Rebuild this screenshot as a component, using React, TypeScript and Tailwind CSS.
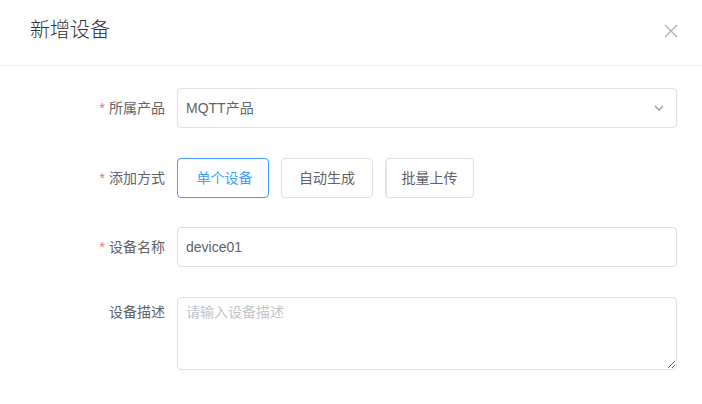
import React from "react";

const font = { fontFamily: '"Liberation Sans", "Noto Sans CJK SC", sans-serif' };

function Label({ text, required }: { text: string; required?: boolean }) {
  return (
    <div className="w-[177px] shrink-0 pr-3 text-right text-[14px] leading-[40px] text-[#606266]">
      {required && <span className="mr-1 text-[#f56c6c]">*</span>}
      {text}
    </div>
  );
}

export default function App() {
  return (
    <div className="h-[404px] w-[702px] overflow-hidden bg-white" style={font}>
      <div className="flex h-[66px] items-center justify-between border-b border-[#ebeef5] pl-[30px] pr-[24px] pb-[6px]">
        <div className="text-[20px] font-light text-[#303133]">新增设备</div>
        <svg width="14" height="14" viewBox="0 0 14 14" className="mt-[2px] text-[#a8abb2]">
          <path d="M1 1L13 13M13 1L1 13" stroke="currentColor" strokeWidth="1.2" fill="none" />
        </svg>
      </div>

      <div className="flex flex-col pt-[22px]">
        <div className="flex">
          <Label text="所属产品" required />
          <div className="flex h-[40px] w-[500px] items-center justify-between rounded border border-[#dcdfe6] pl-2 pr-[12px] text-[14px] text-[#606266]">
            <span>MQTT产品</span>
            <svg width="10" height="6" viewBox="0 0 10 6">
              <path d="M1 1L5 5L9 1" stroke="#909399" strokeWidth="1.3" fill="none" />
            </svg>
          </div>
        </div>

        <div className="mt-[30px] flex">
          <Label text="添加方式" required />
          <div className="flex gap-3">
            <div className="flex h-[40px] w-[92px] items-center justify-center rounded border border-[#409eff] pl-[3px] text-[14px] text-[#409eff]">
              单个设备
            </div>
            <div className="flex h-[40px] w-[92px] items-center justify-center rounded border border-[#dcdfe6] text-[14px] text-[#606266]">
              自动生成
            </div>
            <div className="flex h-[40px] w-[89px] items-center justify-center rounded border border-[#dcdfe6] text-[14px] text-[#606266] shadow-[inset_1px_0_0_0_#e4e7ed]">
              批量上传
            </div>
          </div>
        </div>

        <div className="mt-[29px] flex">
          <Label text="设备名称" required />
          <div className="flex h-[40px] w-[500px] items-center rounded border border-[#dcdfe6] pl-2 text-[14px] text-[#606266]">
            device01
          </div>
        </div>

        <div className="mt-[30px] flex">
          <div className="w-[177px] shrink-0 pr-3 text-right text-[14px] leading-[30px] text-[#606266]">设备描述</div>
          <textarea
            className="h-[73px] w-[500px] resize-y rounded border border-[#dcdfe6] px-2 py-[4px] text-[14px] leading-[21px] text-[#606266] outline-none placeholder:text-[#c0c4cc]"
            style={font}
            placeholder="请输入设备描述"
          />
        </div>
      </div>
    </div>
  );
}
